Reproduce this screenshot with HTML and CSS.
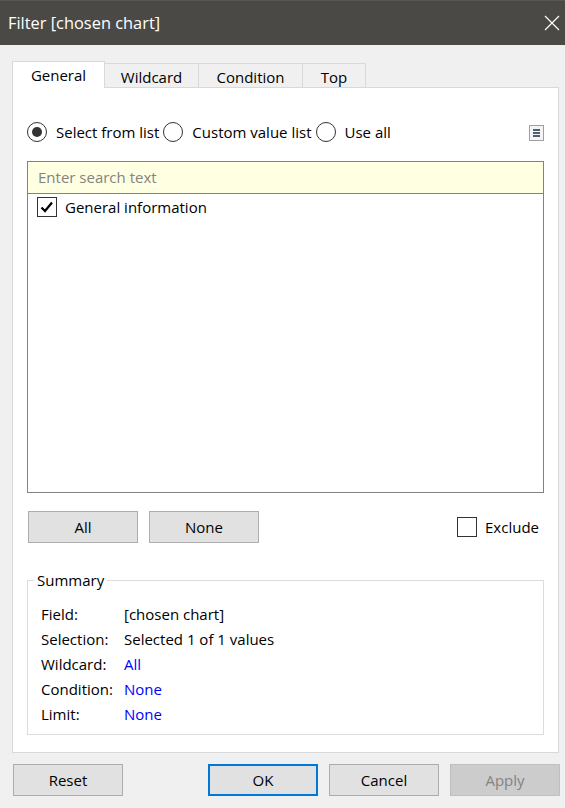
FILE: index.html
```html
<!DOCTYPE html>
<html>
<head>
<meta charset="utf-8">
<link rel="stylesheet" href="styles.css">
</head>
<body>
<div class="window">
  <div class="titlebar">
    <span class="title">Filter [chosen chart]</span>
    <svg class="close" width="16" height="16" viewBox="0 0 16 16"><path d="M1 1 L15 15 M15 1 L1 15" stroke="#ffffff" stroke-width="1.2" fill="none"/></svg>
  </div>

  <div class="tabs">
    <div class="tab tab-general active">General</div>
    <div class="tab tab-wildcard">Wildcard</div>
    <div class="tab tab-condition">Condition</div>
    <div class="tab tab-top">Top</div>
  </div>

  <div class="panel">
    <div class="mode-row">
      <label class="radio"><span class="circle checked"></span><span class="rlabel">Select from list</span></label>
      <label class="radio"><span class="circle"></span><span class="rlabel">Custom value list</span></label>
      <label class="radio"><span class="circle"></span><span class="rlabel">Use all</span></label>
      <span class="menu-icon">
        <svg width="15" height="16" viewBox="0 0 15 16"><rect x="0.5" y="0.5" width="14" height="15" fill="#f4f4f4" stroke="#a0a0a0"/><rect x="4" y="4" width="7" height="2" fill="#4f5d73"/><rect x="4" y="7" width="7" height="2" fill="#4f5d73"/><rect x="4" y="10" width="7" height="2" fill="#4f5d73"/></svg>
      </span>
    </div>

    <div class="listbox">
      <div class="search">Enter search text</div>
      <div class="item">
        <span class="checkbox"><svg width="20" height="20" viewBox="0 0 20 20"><path d="M4.5 10.5 L8 14 L15 5.5" stroke="#000" stroke-width="2.2" fill="none"/></svg></span>
        <span>General information</span>
      </div>
    </div>

    <div class="list-actions">
      <button class="btn btn-all">All</button>
      <button class="btn btn-none">None</button>
      <label class="exclude"><span class="checkbox empty"></span><span>Exclude</span></label>
    </div>

    <fieldset class="summary">
      <legend>Summary</legend>
      <div class="row"><span class="k">Field:</span><span class="v">[chosen chart]</span></div>
      <div class="row"><span class="k">Selection:</span><span class="v">Selected 1 of 1 values</span></div>
      <div class="row"><span class="k">Wildcard:</span><span class="v link">All</span></div>
      <div class="row"><span class="k">Condition:</span><span class="v link">None</span></div>
      <div class="row"><span class="k">Limit:</span><span class="v link">None</span></div>
    </fieldset>
  </div>

  <div class="footer">
    <button class="btn btn-reset">Reset</button>
    <button class="btn btn-ok">OK</button>
    <button class="btn">Cancel</button>
    <button class="btn btn-disabled">Apply</button>
  </div>
</div>
</body>
</html>
```

FILE: styles.css
```css
* { box-sizing: border-box; }
html, body { margin: 0; padding: 0; }
body {
  background: #f0f0f0;
  font-family: "Open Sans", "Noto Sans", sans-serif;
  font-size: 15px;
  color: #000;
}
.window { width: 565px; height: 808px; background: #f0f0f0; }

.titlebar {
  height: 45px;
  background: #4b4946;
  display: flex;
  align-items: center;
  padding: 0 5px 0 8px;
  border-top: 1px solid #5a5855;
}
.title { color: #ffffff; font-size: 16.4px; line-height: 20px; }
.close { margin-left: auto; margin-top: 0px; }

.tabs {
  margin-top: 16px;
  padding-left: 12px;
  height: 26px;
  display: flex;
  align-items: flex-end;
}
.tab {
  height: 24px;
  border-top: 1px solid #d9d9d9;
  border-right: 1px solid #d9d9d9;
  background: #f0f0f0;
  display: flex;
  align-items: center;
  justify-content: center;
  line-height: 20px;
  padding-top: 3px;
}
.tab.active {
  height: 27px;
  background: #ffffff;
  border-left: 1px solid #d9d9d9;
  margin-bottom: -1px;
  position: relative;
  z-index: 1;
  padding-top: 0;
}
.tab-general { width: 93px; }
.tab-wildcard { width: 94px; }
.tab-condition { width: 104px; }
.tab-top { width: 63px; }

.panel {
  margin-left: 12px;
  width: 547px;
  height: 666px;
  background: #ffffff;
  border: 1px solid #d9d9d9;
  padding: 34px 14px 16px 14px;
}

.mode-row {
  height: 20px;
  display: flex;
  align-items: center;
}
.radio { display: flex; align-items: center; }
.circle {
  width: 20px; height: 20px;
  border: 1px solid #333333;
  border-radius: 50%;
  background: #fff;
  display: flex; align-items: center; justify-content: center;
}
.circle.checked::after {
  content: "";
  width: 10px; height: 10px;
  border-radius: 50%;
  background: #333333;
}
.rlabel { margin-left: 9px; margin-right: 4px; line-height: 20px; }
.menu-icon { margin-left: auto; display: flex; margin-top: 2px; }

.listbox {
  margin-top: 19px;
  height: 332px;
  border: 1px solid #828282;
  background: #fff;
}
.search {
  height: 32px;
  background: #ffffe1;
  border-bottom: 1px solid #828282;
  color: #838383;
  padding-left: 10px;
  display: flex;
  align-items: center;
  padding-bottom: 1px;
}
.item {
  display: flex;
  align-items: center;
  padding: 3px 0 0 9px;
  line-height: 20px;
}
.checkbox {
  width: 20px; height: 20px;
  border: 1px solid #333333;
  background: #fff;
  display: flex;
  margin-right: 8px;
}
.checkbox svg { margin: -1px; }

.list-actions {
  margin-top: 18px;
  height: 32px;
  display: flex;
  align-items: center;
}
.btn {
  width: 110px;
  height: 32px;
  background: #e1e1e1;
  border: 1px solid #adadad;
  font-family: inherit;
  font-size: 15px;
  color: #000;
  padding: 0;
  margin: 0;
}
.btn-all { margin-left: 1px; }
.btn-none { margin-left: 11px; }
.exclude { margin-left: auto; margin-right: 5px; display: flex; align-items: center; line-height: 20px; }

.summary {
  margin: 27px 0 0 0;
  padding: 11px 13px 8px 13px;
  border: 1px solid #dcdcdc;
  min-inline-size: 0;
}
.summary legend {
  padding: 0 3px;
  margin-left: -7px;
  line-height: 20px;
}
.row { height: 25px; display: flex; align-items: center; }
.k { width: 83px; }
.link { color: #0000ff; }

.footer {
  margin-top: 11px;
  display: flex;
  gap: 11px;
  padding: 0 5px 0 13px;
}
.btn-reset { margin-right: auto; }
.btn-ok { border: 2px solid #0078d7; }
.btn-disabled { background: #cccccc; border-color: #bfbfbf; color: #838383; }
```
